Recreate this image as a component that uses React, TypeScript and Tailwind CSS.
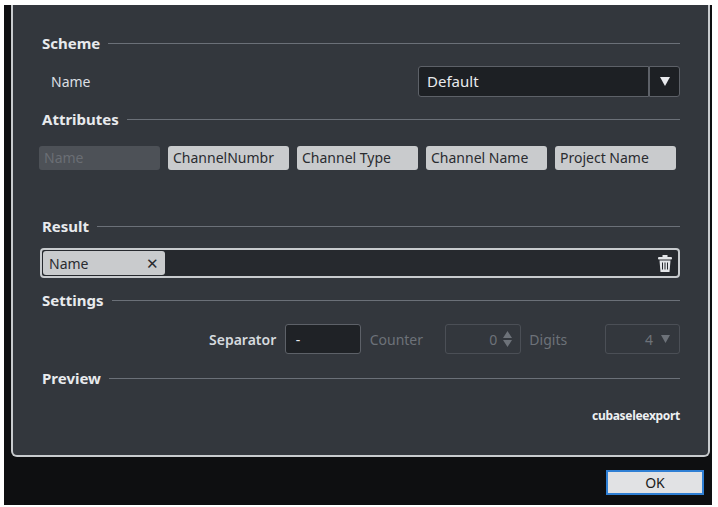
export default function App() {
  const font = { fontFamily: '"Noto Sans","Open Sans",sans-serif' };
  const Heading = ({ t, cls }: { t: string; cls: string }) => (
    <div className={`flex items-center gap-2 ${cls}`}>
      <span className="text-[15px] font-bold text-[#e8eaed] leading-none">{t}</span>
      <div className="flex-1 h-px bg-[#6b7078]" />
    </div>
  );
  const chip = "h-[24px] w-[121px] rounded-[3px] bg-[#c9cbcd] text-[#2a2c30] text-[14px] flex items-center px-[5px] leading-none";
  return (
    <div className="w-[718px] h-[507px] bg-white pt-[5px] pl-[4px] pr-[6px] pb-[2px]" style={font}>
      <div className="h-full bg-[#0e0f11] flex flex-col">
        <div className="ml-[7px] mr-[2px] h-[452px] bg-[#33373d] border-2 border-t-0 border-[#c8cbce] rounded-b-[6px] pl-[29px] pr-[28px] pt-[31px]">
          <Heading t="Scheme" cls="h-[14px]" />
          <div className="flex items-center justify-between mt-[16px] h-[31px]">
            <span className="ml-[9px] text-[14px] text-[#dcdfe3]">Name</span>
            <div className="flex h-[31px] w-[262px]">
              <div className="flex-1 bg-[#1d2024] border border-[#5d6168] rounded-l-[3px] text-[#e8eaed] text-[15px] flex items-center px-[8px]">Default</div>
              <div className="w-[31px] bg-[#1d2024] border border-[#5d6168] rounded-r-[3px] flex items-center justify-center">
                <svg width="10" height="9" viewBox="0 0 10 9"><path d="M0 0h10L5 9z" fill="#e8eaed" /></svg>
              </div>
            </div>
          </div>
          <Heading t="Attributes" cls="h-[14px] mt-[15px]" />
          <div className="flex gap-[8px] mt-[20px] -ml-[3px]">
            <div className={`${chip} !bg-[#4d5157] !text-[#6a6e74]`}>Name</div>
            <div className={chip}>ChannelNumbr</div>
            <div className={chip}>Channel Type</div>
            <div className={chip}>Channel Name</div>
            <div className={chip}>Project Name</div>
          </div>
          <Heading t="Result" cls="h-[14px] mt-[49px]" />
          <div className="mt-[15px] -ml-[2px] h-[30px] border-2 border-[#c8cbce] rounded-[4px] bg-[#26292e] flex items-center pl-[1px] pr-[6px]">
            <div className="h-[24px] w-[122px] rounded-[3px] bg-[#c9cbcd] text-[#2a2c30] text-[14px] flex items-center justify-between px-[6px]">
              <span>Name</span><span className="text-[15px]">✕</span>
            </div>
            <div className="flex-1" />
            <svg width="14" height="17" viewBox="0 0 14 17"><rect x="0" y="2" width="14" height="2.5" rx="1" fill="#e3e5e8"/><rect x="4.5" y="0" width="5" height="2.5" fill="#e3e5e8"/><path d="M1.5 5.5h11l-1 11.5h-9z" fill="#e3e5e8"/><path d="M4.5 7.5v7M7 7.5v7M9.5 7.5v7" stroke="#26292e" strokeWidth="1"/></svg>
          </div>
          <Heading t="Settings" cls="h-[14px] mt-[15px]" />
          <div className="flex items-center mt-[17px] h-[30px] pl-[167px] text-[14px]">
            <span className="text-[#d6dadf] font-semibold w-[76px]">Separator</span>
            <div className="w-[76px] h-[30px] border border-[#5d6168] rounded-[3px] bg-[#1f2226] text-[#e8eaed] flex items-center px-[10px]">-</div>
            <span className="text-[#6d7279] ml-[9px] w-[75px]">Counter</span>
            <div className="w-[77px] h-[30px] border border-[#4b4f56] rounded-[3px] flex items-center justify-end gap-[6px] pr-[8px] text-[#6d7279]">
              0
              <svg width="9" height="16" viewBox="0 0 9 16"><path d="M0 7h9L4.5 0zM0 9h9l-4.5 7z" fill="#6d7279"/></svg>
            </div>
            <span className="text-[#6d7279] ml-[8px] w-[76px]">Digits</span>
            <div className="w-[75px] h-[30px] border border-[#4b4f56] rounded-[3px] flex items-center justify-end gap-[8px] pr-[9px] text-[#6d7279]">
              4
              <svg width="9" height="8" viewBox="0 0 9 8"><path d="M0 0h9L4.5 8z" fill="#6d7279"/></svg>
            </div>
          </div>
          <Heading t="Preview" cls="h-[14px] mt-[17px]" />
          <div className="text-right mt-[22px] text-[12px] font-bold text-[#eef0f2] tracking-[-0.3px]">cubaseleexport</div>
        </div>
        <div className="flex justify-end pr-[8px] mt-[13px]">
          <div className="w-[98px] h-[25px] bg-[#e1e2e4] border-2 border-[#2f7fd4] flex items-center justify-center text-[14px] text-[#1a1a1a]">OK</div>
        </div>
      </div>
    </div>
  );
}
